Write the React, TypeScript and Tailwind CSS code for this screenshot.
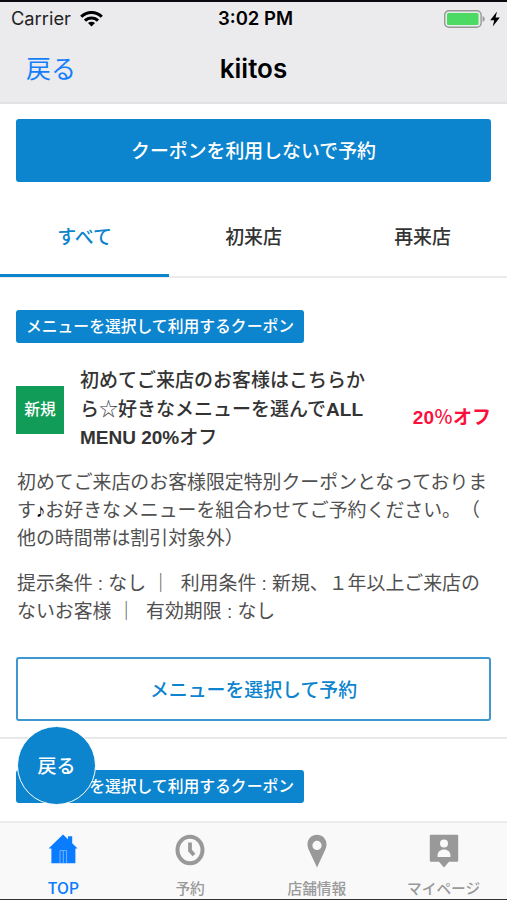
import React from 'react';
import { clsx } from 'clsx';

const HomeIcon = () => (
  <svg width="30" height="30" viewBox="0 0 30 30" fill="currentColor">
    <path d="M15 0.6 L20 5.2 V2.2 H24.2 V9.2 L29.6 14.4 H27.4 V29.2 H3.4 V14.4 H0.6 Z" />
    <path d="M12 29 V16.6 H18.6 V29 M15.3 16.6 V29" fill="none" stroke="#6fb4ff" strokeWidth="1" />
  </svg>
);

const ClockIcon = () => (
  <svg width="30" height="32" viewBox="0 0 30 32" fill="none" stroke="currentColor">
    <ellipse cx="15" cy="16" rx="12.5" ry="13.3" strokeWidth="4" />
    <path d="M15 8.5 V16.5 L19 21" strokeWidth="3.8" />
  </svg>
);

const PinIcon = () => (
  <svg width="20" height="34" viewBox="0 0 20 34" fill="currentColor">
    <path
      fillRule="evenodd"
      d="M10 0.8 C4.6 0.8 0.5 5 0.5 10.3 C0.5 13 1.5 15.4 2.8 18 L10 33.6 L17.2 18 C18.5 15.4 19.5 13 19.5 10.3 C19.5 5 15.4 0.8 10 0.8 Z M10 6.8 A4.6 4.6 0 1 1 10 16 A4.6 4.6 0 1 1 10 6.8 Z"
    />
  </svg>
);

const MyPageIcon = () => (
  <svg width="30" height="34" viewBox="0 0 30 34">
    <path fill="currentColor" d="M1.5 0.8 H28 Q29.2 0.8 29.2 2 V26.5 Q29.2 27.7 28 27.7 H20 L15 33.4 L10 27.7 H2 Q0.8 27.7 0.8 26.5 V2 Q0.8 0.8 1.5 0.8 Z" />
    <circle cx="15" cy="9.4" r="4" fill="#f9f9f9" />
    <path fill="#f9f9f9" d="M8.6 23 V21.5 C8.6 17.9 11.3 15.6 15 15.6 C18.7 15.6 21.4 17.9 21.4 21.5 V23 Z" />
  </svg>
);

const tabs = ['すべて', '初来店', '再来店'];

const navItems = [
  { label: 'TOP', icon: <HomeIcon />, active: true },
  { label: '予約', icon: <ClockIcon /> },
  { label: '店舗情報', icon: <PinIcon /> },
  { label: 'マイページ', icon: <MyPageIcon /> },
];

const CouponLabel = () => (
  <div className="flex h-[33px] w-[288px] items-center justify-center rounded-[3px] bg-[#0c84ce] text-[15.8px] font-medium text-white whitespace-nowrap">
    メニューを選択して利用するクーポン
  </div>
);

const App = () => {
  return (
    <div className="relative flex h-[900px] w-[507px] flex-col overflow-hidden border-t-2 border-b border-t-[#0c0a10] border-b-[#333] bg-white font-['Liberation_Sans','Noto_Sans_CJK_JP',sans-serif] text-[#333] [text-spacing-trim:space-all]">
      {/* Header */}
      <header className="h-[102px] shrink-0 border-b-2 border-[#e2e2e3] bg-[#ebebed] font-['Inter','Noto_Sans_CJK_JP',sans-serif] text-black">
        <div className="grid h-8 grid-cols-3 items-center pt-[1px] pr-[7px] pl-[11px]">
          <div className="flex items-center gap-[9px] text-[18.3px] text-[#222]">
            Carrier
            <svg width="23" height="16" viewBox="0 0 23 16" fill="none" stroke="#000" strokeWidth="3">
              <path d="M1.2 5.7 A14.6 14.6 0 0 1 21.8 5.7" />
              <path d="M5 9.6 A9.2 9.2 0 0 1 18 9.6" />
              <path d="M11.5 15.6 L8 12.1 A5 5 0 0 1 15 12.1 Z" fill="#000" stroke="none" />
            </svg>
          </div>
          <div className="text-center text-[18.5px] font-semibold whitespace-nowrap">3:02 PM</div>
          <div className="flex items-center justify-end gap-[5px]">
            <svg width="41" height="18" viewBox="0 0 41 18">
              <rect x="0.7" y="0.7" width="36.4" height="16.6" rx="4.2" fill="#e5efe6" stroke="#989899" strokeWidth="1.4" />
              <rect x="3" y="3" width="31.5" height="12" rx="1.5" fill="#4cd964" />
              <path d="M38.6 6 Q40.8 7 40.8 9 Q40.8 11 38.6 12 Z" fill="#989899" />
            </svg>
            <svg width="10" height="16" viewBox="0 0 10 16">
              <path d="M7 0.4 L0.2 9.2 H4.2 L2.8 15.6 L9.8 6.6 H5.6 Z" fill="#000" />
            </svg>
          </div>
        </div>
        <div className="grid h-[68px] grid-cols-3 items-center px-[26px] pt-1">
          <button className="text-left text-[25px] text-[#147efb]">戻る</button>
          <h1 className="pb-[4px] text-center text-[26px] font-semibold">kiitos</h1>
        </div>
      </header>

      {/* Coupons */}
      <main className="flex min-h-0 flex-1 flex-col overflow-hidden">
        <button className="mx-4 mt-[15px] h-[63px] shrink-0 rounded-[3px] bg-[#0c84ce] pt-[4px] text-[18.9px] font-medium text-white">
          クーポンを利用しないで予約
        </button>

        <div className="mt-4 grid h-20 shrink-0 grid-cols-3 border-b-2 border-[#ebebeb]">
          {tabs.map((tab, i) => (
            <button
              key={tab}
              className={clsx(
                'h-[79px] border-b-[3px] pt-[4px] text-[18.9px] font-medium',
                i === 0 ? 'border-[#0c84ce] text-[#0c84ce]' : 'border-transparent'
              )}
            >
              {tab}
            </button>
          ))}
        </div>

        <section className="flex h-[461px] shrink-0 flex-col border-b-2 border-[#e8e8e8] px-4 pt-8">
          <CouponLabel />

          <div className="mt-[24px] flex items-center">
            <div className="flex size-12 shrink-0 items-center justify-center bg-[#119c57] text-[15.8px] font-medium text-white">
              新規
            </div>
            <h2 className="ml-4 text-[19px] leading-[28.5px] font-medium whitespace-nowrap">
              初めてご来店のお客様はこちらか<br />
              ら<span className="font-light">☆</span>好きなメニューを選んで<span className="font-bold">ALL</span><br />
              <span className="font-bold">MENU 20%</span>オフ
            </h2>
            <div className="mt-4 ml-auto text-[19px] font-bold whitespace-nowrap text-[#fb0f3c]">
              20<span className="font-medium">％</span>オフ
            </div>
          </div>

          <p className="mt-4 ml-[1px] text-[18.9px] leading-[28.4px] whitespace-nowrap text-[#505050]">
            初めてご来店のお客様限定特別クーポンとなっておりま<br />
            す<span className="font-bold text-black">♪</span>お好きなメニューを組合わせてご予約ください。（<br />
            他の時間帯は割引対象外）
          </p>
          <p className="mt-4 ml-[1px] text-[18.9px] leading-[28.4px] whitespace-nowrap text-[#505050]">
            提示条件 : なし ｜&nbsp; 利用条件 : 新規、１年以上ご来店の<br />
            ないお客様 ｜&nbsp; 有効期限 : なし
          </p>

          <button className="mt-[30px] h-16 shrink-0 rounded-[3px] border-2 border-[#3f97d0] pt-[5px] text-[18.9px] font-medium text-[#0c84ce]">
            メニューを選択して予約
          </button>
        </section>

        <section className="px-4 pt-[31px]">
          <CouponLabel />
        </section>
      </main>

      {/* Floating back button */}
      <button className="absolute top-[724px] left-[17px] flex size-[79px] items-center justify-center rounded-full border-[1.5px] border-white bg-[#0c84ce] pt-[3px] text-[19px] font-medium text-white">
        戻る
      </button>

      {/* Bottom navigation */}
      <nav className="grid h-[78px] shrink-0 grid-cols-4 border-t-2 border-[#ececec] bg-[#f9f9f9]">
        {navItems.map(({ label, icon, active }) => (
          <a
            key={label}
            className={clsx(
              "flex flex-col items-center font-['Noto_Sans_CJK_JP',sans-serif] leading-5 font-medium",
              active ? 'text-[15.8px] text-[#0a7cff]' : 'text-[14.7px] text-[#999]'
            )}
          >
            <span className="flex h-[55px] items-start justify-center pt-[11px]">{icon}</span>
            {label}
          </a>
        ))}
      </nav>
    </div>
  );
};

export default App;
